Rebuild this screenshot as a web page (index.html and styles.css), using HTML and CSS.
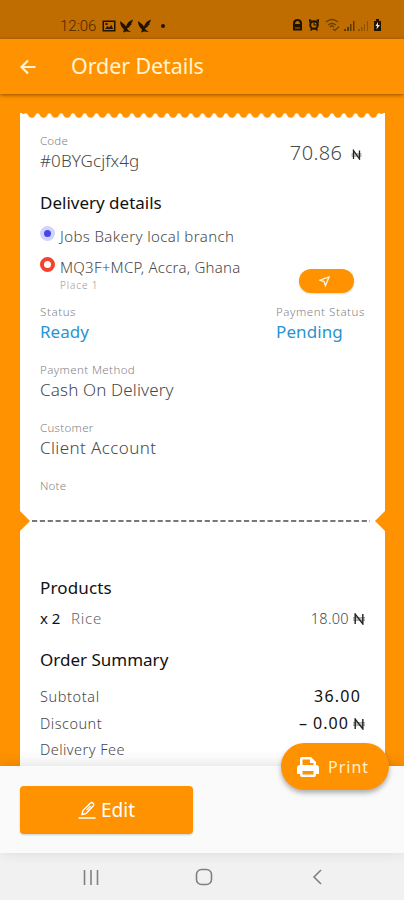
FILE: index.html
```html
<!DOCTYPE html>
<html lang="en">
<head>
<meta charset="utf-8">
<meta name="viewport" content="width=device-width">
<title>Order Details</title>
<link rel="stylesheet" href="styles.css">
</head>
<body>
<div class="screen">
  <header class="status">
    <div class="status-left">
      <span class="clock">12:06</span>
      <svg class="pic" viewBox="0 0 14 12"><path fill-rule="evenodd" d="M.5.5h13v11H.5zM2 2v8h10V2z"/><path d="M3 9l2.500-3 1.500 1.500L9.500 5 11 9zM3.500 3h2v2h-2z"/></svg>
      <svg class="bird" viewBox="0 0 14 14"><path d="M0 2l4.500 3.500 1.500 2c1-3.500 3-5.500 7-7-.5 2-1 3-2 4l1 .5-2.500 2 .5.500-3 2 1 1.500 3 2-5-.5-3 1 1-3C2 9 0 6 0 2z"/></svg>
      <svg class="bird" viewBox="0 0 14 14"><path d="M0 2l4.500 3.500 1.500 2c1-3.500 3-5.500 7-7-.5 2-1 3-2 4l1 .5-2.500 2 .5.500-3 2 1 1.500 3 2-5-.5-3 1 1-3C2 9 0 6 0 2z"/></svg>
      <i class="dot"></i>
    </div>
    <svg class="status-right" viewBox="0 0 92 14">
      <path fill-rule="evenodd" d="M1 12.500V5.500Q1 1 5.500 1T10 5.500v7zM3 6h5Q7.500 3 5.500 3T3 6zm0 3.500v1h5v-1z"/>
      <circle cx="22" cy="7" r="3.800" fill="none" stroke="#211300" stroke-width="2"/><path d="M17 1l3 1-3 3zM27 1l-3 1 3 3zM18 12l2-2 1 1-2 2zM26 12l-2-2-1 1 2 2zM21.500 4h1v2.500H25v1h-3.500z"/>
      <path d="M34 4q6-5 12 0M36 7q4-3 8 0M38 9q2-2 4 0M41 11l2 1.500 4-4" fill="none" stroke="#694000" stroke-width="1.300"/>
      <path d="M52 11h2v2h-2zM55 9h2v4h-2zM58 6h1.500v7H58zM61 3h1.500v10H61z" fill="#5e3900"/>
      <path d="M66 11h2v2h-2zM69 9h1.500v4H69zM72 6h1v7h-1zM75 3h1v10h-1z" fill="#8a5200"/>
      <path d="M82 3h2V1h3v2h2v10h-7z"/><path d="M86 4l-2.500 4h1.500l-.5 3.500L88 7h-2z" fill="#f4e4c8"/>
    </svg>
  </header>
  <div class="appbar">
    <svg class="back" viewBox="0 0 16 16"><path d="M15.500 8H2M8 1.500L1.500 8 8 14.500"/></svg>
    <h1>Order Details</h1>
  </div>
  <main class="content">
    <section class="ticket">
      <svg class="edge" viewBox="0 0 365 5" preserveAspectRatio="none"><defs><pattern id="scallop" width="11.774" height="5" patternUnits="userSpaceOnUse"><path d="M0 4.800C2.600 4.800 3.700 2.500 4 1.400Q5.887-.8 7.774 1.400C8.100 2.500 9.200 4.800 11.774 4.800V5H0z" fill="#fff"/></pattern></defs><rect width="365" height="5" fill="url(#scallop)"/><path d="M0 0h1.500Q3 1.500 6 .5v4.500H0zM365 0h-1.500Q362 1.500 359 .5v4.500h6z" fill="#fff"/></svg>
      <div class="upper">
        <div class="row code-row">
          <div><p class="label code-label">Code</p><p class="value code">#0BYGcjfx4g</p></div>
          <p class="total">70.86 <svg class="naira small" viewBox="0 0 11 11"><path d="M2.500 10V1.500l6 8.500V1.500"/><path class="bars" d="M.5 5h10M.5 7h10"/></svg></p>
        </div>
        <h2 class="h-delivery">Delivery details</h2>
        <div class="place"><i class="origin"></i><p class="from">Jobs Bakery local branch</p></div>
        <div class="row stop">
          <div class="place"><i class="dest"></i><div><p class="to">MQ3F+MCP, Accra, Ghana</p><p class="sub">Place 1</p></div></div>
          <button class="nav-btn"><svg viewBox="0 0 12 12"><path d="M1 4.500L11 1 7 10.500 5.500 6z"/></svg></button>
        </div>
        <div class="row statuses">
          <div><p class="label l-status">Status</p><p class="value blue ready">Ready</p></div>
          <div class="pay"><p class="label l-pay">Payment Status</p><p class="value blue pending">Pending</p></div>
        </div>
        <div class="field"><p class="label l-method">Payment Method</p><p class="value method">Cash On Delivery</p></div>
        <div class="field"><p class="label l-customer">Customer</p><p class="value client">Client Account</p></div>
        <div class="field"><p class="label l-note">Note</p></div>
      </div>
      <div class="tear"><i class="notch left"></i><svg class="dashes" viewBox="0 0 338 2"><path d="M0 1h338"/></svg><i class="notch right"></i></div>
      <div class="lower">
        <h2 class="h-products">Products</h2>
        <div class="row item"><p><span class="qty">x 2</span><span class="rice">Rice</span></p><p class="price">18.00 <svg class="naira" viewBox="0 0 11 11"><path d="M2 10V1l7 9V1"/><path class="bars" d="M0 4.500h11M0 6.500h11"/></svg></p></div>
        <h2 class="h-summary">Order Summary</h2>
        <div class="row sum"><p class="subtotal">Subtotal</p><p class="amount a-sub">36.00</p></div>
        <div class="row sum"><p class="discount">Discount</p><p class="amount">– 0.00 <svg class="naira" viewBox="0 0 11 11"><path d="M2 10V1l7 9V1"/><path class="bars" d="M0 4.500h11M0 6.500h11"/></svg></p></div>
        <div class="row sum"><p class="fee">Delivery Fee</p></div>
      </div>
    </section>
  </main>
  <footer class="actions">
    <button class="edit"><svg viewBox="0 0 18 18"><path d="M.5 17h17M4 13.500l1-4 7.500-7.500q1.200-1 2.200 0l.6.600q1 1 0 2.200L8 12.500zM8.500 9l4-4"/></svg><span>Edit</span></button>
    <button class="print"><svg viewBox="0 0 22 22"><path fill-rule="evenodd" d="M3 9V3q0-2 2-2h9l5 5v3q3 0 3 3v6h-3v1q0 2-2 2H5q-2 0-2-2v-1H0v-6q0-3 3-3zm2.500 0h11V7H13V3.500H5.500zm0 6v3.500h11V15z"/></svg><span>Print</span></button>
  </footer>
  <nav class="navbar">
    <svg viewBox="0 0 18 18"><path d="M2.500 2v15M9 2v15M15.500 2v15"/></svg>
    <svg viewBox="0 0 18 18"><rect x="1.500" y="1.500" width="15" height="15" rx="5"/></svg>
    <svg viewBox="0 0 18 18"><path d="M13 2L6 9l7 7"/></svg>
  </nav>
</div>
</body>
</html>
```
FILE: styles.css
```css
* { box-sizing: border-box; margin: 0; padding: 0; }
body { font-family: "Noto Sans", "Open Sans", sans-serif; font-weight: 300; color: #484848; }
button { border: 0; font: inherit; color: #fff; background: #ff9200; }
.screen { width: 404px; height: 900px; display: flex; flex-direction: column; overflow: hidden; background: #ff9200; }
.status { height: 39px; flex: none; background: #bf6d00; display: flex; justify-content: space-between; padding: 18px 20px 0 60px; fill: #211300; }
.status-left { display: flex; align-items: center; height: 15px; }
.clock { font: 300 15px "Roboto", sans-serif; color: #442700; width: 42px; }
.pic { width: 14px; height: 12px; margin-right: 4px; }
.bird { width: 14px; height: 14px; margin-right: 4px; }
.dot { width: 4px; height: 4px; border-radius: 50%; background: #211300; margin-left: 5px; }
.status-right { width: 92px; height: 14px; }
.appbar { height: 55px; flex: none; display: flex; align-items: center; padding-left: 20px; box-shadow: 0 1px 4px rgba(80,40,0,.65); color: #fff4d2; position: relative; }
.back { width: 16px; height: 16px; margin-right: 35px; fill: none; stroke: #fff4d2; stroke-width: 2.2; }
h1 { font-size: 21.5px; font-weight: 400; letter-spacing: -.1px; line-height: 30px; margin-bottom: 2px; }
.content { flex: 1; min-height: 0; overflow: hidden; padding: 19px 19px 0 20px; }
.edge { display: block; width: 365px; height: 5px; }
.upper { background: #fff; height: 393px; padding: 15px 20px 0; }
.row { display: flex; justify-content: space-between; }
.label { font-size: 11.5px; line-height: 16px; color: #848484; white-space: nowrap; }
.code-label { letter-spacing: .2px; }
.l-status { letter-spacing: .6px; }
.l-pay { letter-spacing: .55px; }
.l-method { letter-spacing: .4px; }
.l-customer { letter-spacing: .3px; }
.l-note { letter-spacing: .2px; }
.value { font-size: 17px; line-height: 24px; white-space: nowrap; }
.code { letter-spacing: .1px; }
.method { letter-spacing: .15px; }
.client { letter-spacing: .4px; }
.code-row { height: 57px; }
.total { font-size: 20px; line-height: 30px; margin-top: 5px; padding-right: 3px; letter-spacing: .4px; }
.naira { width: 12px; height: 12px; fill: none; stroke: #222; stroke-width: 1.3; vertical-align: -1px; }
.bars { stroke-width: .6; }
.small { width: 11px; height: 11px; margin-left: 3px; vertical-align: 0; }
h2 { font-size: 17px; line-height: 26px; font-weight: 400; color: #111; white-space: nowrap; }
.h-products { letter-spacing: .15px; }
.place { display: flex; }
.from, .to { font-size: 15px; line-height: 22px; white-space: nowrap; }
.from { margin-top: 1px; letter-spacing: .38px; }
.to { margin-top: 1px; letter-spacing: .25px; }
.h-delivery + .place { height: 31px; padding-top: 8px; }
.origin, .dest { flex: none; width: 15px; height: 15px; border-radius: 50%; margin-right: 5px; }
.origin { background: #4545e8; border: 4px solid #d2d2fb; margin-top: 2px; }
.dest { border: 4px solid #f4432c; margin-top: 2px; }
.stop { height: 57px; padding-top: 8px; }
.sub { font-size: 10px; line-height: 12px; color: #999; letter-spacing: .9px; margin-top: 1px; }
.nav-btn { width: 55px; height: 24px; border-radius: 12px; margin: 14px 11px 0 0; padding-right: 5px; box-shadow: 0 1px 2px #9996; flex: none; }
.nav-btn svg { width: 11px; height: 11px; fill: none; stroke: #fff4dc; stroke-width: 1.5; display: block; margin: auto; }
.statuses, .field { height: 58px; }
.blue { color: #2894d2; }
.ready { font-weight: 400; }
.pending { font-weight: 400; letter-spacing: .1px; }
.pay { width: 89px; }
.tear { height: 20px; display: flex; align-items: center; justify-content: space-between; background: #fff; }
.notch { width: 10px; height: 20px; background: #ff9200; }
.left { clip-path: polygon(0 0, 100% 50%, 0 100%); }
.right { clip-path: polygon(100% 0, 0 50%, 100% 100%); }
.dashes { width: 338px; height: 2px; stroke: #4c4c4c; stroke-width: 1.3; stroke-dasharray: 5.200 2.650; margin-right: 3px; }
.lower { background: #fff; padding: 44px 20px 0; height: 250px; }
.item { height: 46px; padding-top: 6px; font-size: 15px; line-height: 22px; }
.qty { color: #111; font-weight: 400; display: inline-block; width: 31px; }
.rice { color: #666; letter-spacing: .8px; }
.price { font-size: 14.5px; letter-spacing: .3px; }
.h-summary { margin-bottom: 10px; }
.sum { font-size: 14.5px; line-height: 26.5px; height: 26.5px; }
.subtotal { letter-spacing: .6px; }
.discount { letter-spacing: .5px; }
.fee { letter-spacing: .45px; }
.amount { color: #111; font-weight: 400; font-size: 16px; letter-spacing: 1px; }
.amount .naira { margin-left: -1px; }
.a-sub { padding-right: 4px; letter-spacing: 1.2px; }
.actions { height: 87px; flex: none; background: #fafafa; box-shadow: 0 -2px 14px rgba(0,0,0,.12); position: relative; padding: 20px 20px; }
.edit { width: 173px; height: 48px; border-radius: 4px; font-size: 19px; font-weight: 400; display: flex; align-items: center; justify-content: center; gap: 5px; box-shadow: 0 1px 2px #9997; }
.edit svg { width: 18px; height: 18px; fill: none; stroke: #fff; stroke-width: 1.4; }
.print { position: absolute; right: 15px; top: -23px; width: 108px; height: 47px; border-radius: 24px; display: flex; align-items: center; gap: 9px; padding-left: 16px; color: #fff0cd; font-size: 16px; font-weight: 400; letter-spacing: 1px; box-shadow: 0 3px 5px rgba(80,80,80,.45); }
.print svg { width: 22px; height: 22px; fill: #fff; }
.navbar { height: 47px; flex: none; background: #f1f1f1; display: flex; justify-content: space-between; align-items: center; padding: 0 78px 0 82px; }
.navbar svg { width: 18px; height: 18px; fill: none; stroke: #818181; stroke-width: 1.6; }
```
